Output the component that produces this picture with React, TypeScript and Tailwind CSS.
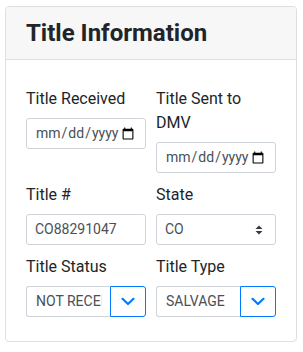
import React from "react";

const font = { fontFamily: 'Roboto, "Liberation Sans", sans-serif' };

function Label({ children }: { children: React.ReactNode }) {
  return <label className="block text-[16px] leading-[24px] text-[#212529] mb-[7px]">{children}</label>;
}

function DateInput() {
  return (
    <input
      type="date"
      className="block w-full h-[31px] px-[8px] text-[14px] leading-[21px] text-[#495057] bg-white border border-[#ced4da] rounded-[3px] outline-none"
      style={font}
    />
  );
}

function TextInput({ value }: { value: string }) {
  return (
    <div className="w-full h-[31px] px-[8px] flex items-center text-[14px] text-[#495057] bg-white border border-[#ced4da] rounded-[3px] overflow-hidden whitespace-nowrap">
      {value}
    </div>
  );
}

function Select({ value }: { value: string }) {
  return (
    <div className="w-full h-[31px] pl-[8px] pr-[12px] flex items-center justify-between text-[14px] text-[#495057] bg-white border border-[#ced4da] rounded-[3px]">
      <span>{value}</span>
      <svg width="8" height="10" viewBox="0 0 8 10">
        <path d="M4 0.5 L7.5 4 H0.5 Z" fill="#343a40" />
        <path d="M4 9.5 L7.5 6 H0.5 Z" fill="#343a40" />
      </svg>
    </div>
  );
}

function Combo({ value }: { value: string }) {
  return (
    <div className="flex w-full h-[31px] text-[14px] text-[#495057]">
      <div className="flex-1 min-w-0 h-full bg-white border border-[#ced4da] border-r-0 rounded-l-[3px] pl-[9px] pr-[8px] flex items-center">
        <div className="overflow-hidden whitespace-nowrap">{value}</div>
      </div>
      <div className="w-[36px] h-full border border-[#007bff] rounded-r-[3px] bg-white flex items-center justify-center">
        <svg width="14" height="9" viewBox="0 0 14 9">
          <path d="M1.5 1.8 L7 7 L12.5 1.8" fill="none" stroke="#007bff" strokeWidth="2.2" strokeLinecap="round" strokeLinejoin="round" />
        </svg>
      </div>
    </div>
  );
}

export default function App() {
  return (
    <div className="pl-[5px] pt-[6px] bg-white min-h-[352px]" style={font}>
      <div className="w-[292px] border border-[#dfdfdf] rounded-[4px] bg-white overflow-hidden">
        <div className="bg-[#f7f7f7] border-b border-[#dfdfdf] px-[20px] py-[12px]">
          <h3 className="text-[24px] leading-[28px] font-bold text-[#212529]">Title Information</h3>
        </div>
        <div className="px-[20px] pt-[27px] pb-[24px]">
          <div className="grid grid-cols-2 gap-x-[10px] gap-y-[10px] items-start">
            <div>
              <Label>Title Received</Label>
              <DateInput />
            </div>
            <div>
              <Label>Title Sent to DMV</Label>
              <DateInput />
            </div>
            <div>
              <Label>Title #</Label>
              <TextInput value="CO88291047" />
            </div>
            <div>
              <Label>State</Label>
              <Select value="CO" />
            </div>
            <div>
              <Label>Title Status</Label>
              <Combo value="NOT RECEIVED" />
            </div>
            <div>
              <Label>Title Type</Label>
              <Combo value="SALVAGE" />
            </div>
          </div>
        </div>
      </div>
    </div>
  );
}
